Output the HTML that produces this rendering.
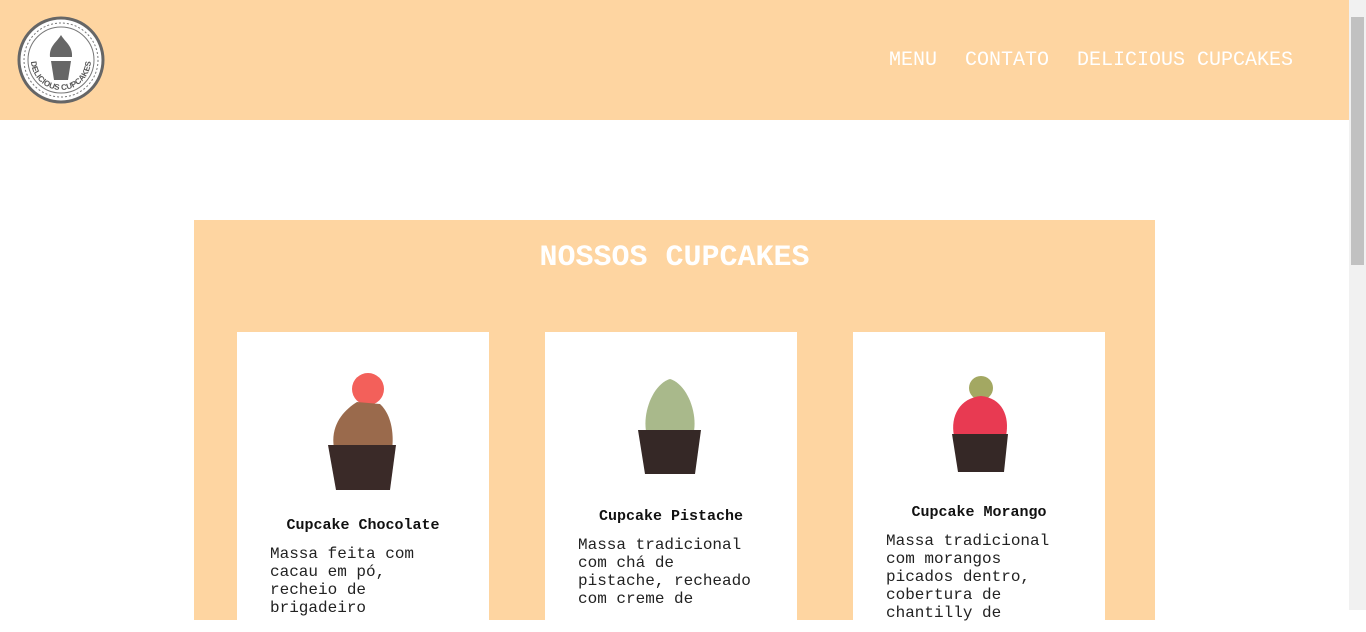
<!DOCTYPE html>
<html><head><meta charset="utf-8"><style>
body{margin:0;width:1366px;height:610px;overflow:hidden;font-family:"Liberation Mono",monospace;background:#fff;position:relative}
.sb{position:absolute;right:0;top:0;width:17px;height:610px;background:#f1f1f1}
.sb div{position:absolute;left:2px;top:17px;width:13px;height:248px;background:#c1c1c1}
header{position:absolute;left:0;top:0;width:1349px;height:120px;background:#fed5a1}
nav{position:absolute;top:49px;left:889px;color:#fff;font-size:20px;line-height:24px;white-space:nowrap}
nav span{position:absolute;top:0}
.sec{position:absolute;left:194px;top:220px;width:961px;height:400px;background:#fed5a1}
h1{position:absolute;top:20px;left:0;width:100%;text-align:center;margin:0;color:#fff;font-size:30px;line-height:36px;font-weight:bold}
.card{position:absolute;top:112px;width:252px;height:300px;background:#fff}
.card h3{position:absolute;left:0;width:100%;text-align:center;margin:0;font-size:15px;line-height:18px;font-weight:bold;color:#111}
.card p{position:absolute;left:33px;width:175px;margin:0;font-size:16px;line-height:18px;color:#222}
</style></head><body>
<header>
<svg style="position:absolute;left:17px;top:16px" width="88" height="88" viewBox="0 0 88 88">
<circle cx="44" cy="44" r="42" fill="#fff" stroke="#666" stroke-width="3"/>
<circle cx="44" cy="44" r="37" fill="none" stroke="#777" stroke-width="1" stroke-dasharray="2 2"/>
<circle cx="44" cy="44" r="33" fill="none" stroke="#777" stroke-width="1"/>
<path d="M33 41 C32 30 40 26 44 19 C48 26 56 30 55 41 Z" fill="#666"/>
<path d="M34 45 L54 45 L51 64 L37 64 Z" fill="#666"/>
<path id="arc" d="M14 44 A30 30 0 0 0 74 44" fill="none"/>
<text font-size="8" font-weight="bold" fill="#555" font-family="Liberation Sans,sans-serif"><textPath href="#arc" startOffset="50%" text-anchor="middle">DELICIOUS CUPCAKES</textPath></text>
</svg>
<nav><span style="left:0">MENU</span><span style="left:76px">CONTATO</span><span style="left:188px">DELICIOUS CUPCAKES</span></nav>
</header>
<div class="sec">
<h1>NOSSOS CUPCAKES</h1>
<div class="card" style="left:43px">
<svg style="position:absolute;left:85px;top:38px" width="80" height="135"><circle cx="46" cy="19" r="16" fill="#f3605a"/><path d="M12 78 C8 55 22 40 35 32 L58 34 C70 45 72 65 70 80 Z" fill="#9a6a4c"/><path d="M6 75 L74 75 L68 120 L14 120 Z" fill="#3a2a28"/></svg>
<h3 style="top:185px">Cupcake Chocolate</h3>
<p style="top:213px">Massa feita com cacau em pó, recheio de brigadeiro</p></div>
<div class="card" style="left:351px">
<svg style="position:absolute;left:90px;top:42px" width="70" height="125"><path d="M12 62 C6 40 18 10 35 5 C52 10 64 40 58 62 Z" fill="#a9b98b"/><path d="M3 56 L66 56 L60 100 L10 100 Z" fill="#352826"/></svg>
<h3 style="top:176px">Cupcake Pistache</h3>
<p style="top:204px">Massa tradicional com chá de pistache, recheado com creme de</p></div>
<div class="card" style="left:659px">
<svg style="position:absolute;left:95px;top:44px" width="65" height="100"><circle cx="33" cy="12" r="12" fill="#a3a862"/><path d="M6 60 C2 40 12 22 33 20 C54 22 62 40 58 60 Z" fill="#e83a52"/><path d="M4 58 L60 58 L56 96 L10 96 Z" fill="#352826"/></svg>
<h3 style="top:172px">Cupcake Morango</h3>
<p style="top:200px">Massa tradicional com morangos picados dentro, cobertura de chantilly de</p></div>
</div>
<div class="sb"><div></div></div>
</body></html>
